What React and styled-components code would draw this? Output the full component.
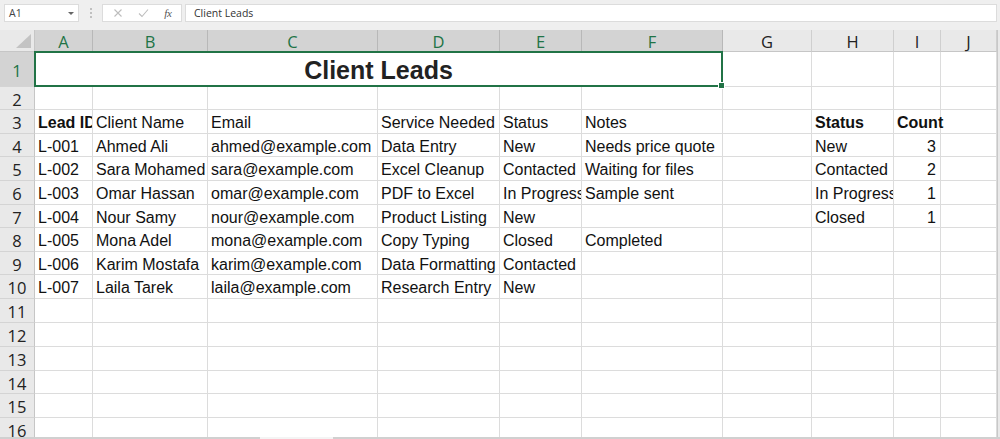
import React from "react";
import styled, { createGlobalStyle } from "styled-components";

const Global = createGlobalStyle`
  html, body { margin: 0; padding: 0; background: #ffffff; }
  body { width: 1000px; height: 439px; overflow: hidden; font-family: "Liberation Sans", Arial, sans-serif; }
  * { box-sizing: border-box; }
`;

const Page = styled.div`
  width: 1000px;
  height: 439px;
  display: flex;
  flex-direction: column;
  overflow: hidden;
  background: #fff;
`;

const TopBar = styled.div`
  height: 30px;
  flex: none;
  display: flex;
  align-items: flex-start;
  padding: 4px 3px 0 4px;
  background: #efefef;
  font-family: "Open Sans", "Noto Sans", sans-serif;
  font-size: 10.5px;
  color: #333;
`;

const NameBox = styled.div`
  width: 75px;
  height: 18px;
  background: #fff;
  border: 1px solid #dcdcdc;
  display: flex;
  align-items: center;
  justify-content: space-between;
  padding: 0 4px 0 4px;
  color: #444;
`;

const Caret = styled.span`
  width: 0;
  height: 0;
  border-left: 3px solid transparent;
  border-right: 3px solid transparent;
  border-top: 3px solid #666;
`;

const Grip = styled.div`
  width: 23px;
  height: 18px;
  display: flex;
  flex-direction: column;
  align-items: center;
  justify-content: center;
  gap: 2px;
  span { width: 2px; height: 2px; background: #b0b0b0; border-radius: 1px; }
`;

const FxBox = styled.div`
  width: 80px;
  height: 18px;
  background: #fff;
  border: 1px solid #dcdcdc;
  display: flex;
  align-items: center;
  justify-content: space-around;
  padding: 0 2px;
`;

const FxGlyph = styled.span`
  font-family: "Liberation Serif", serif;
  font-style: italic;
  font-size: 11px;
  color: #555;
  letter-spacing: -0.5px;
`;

const FormulaInput = styled.div`
  flex: 1;
  height: 18px;
  margin-left: 3px;
  background: #fff;
  border: 1px solid #dcdcdc;
  display: flex;
  align-items: center;
  padding-left: 8px;
  color: #333;
`;

const SheetArea = styled.div`
  flex: 1;
  display: flex;
  overflow: hidden;
`;

const Grid = styled.div`
  width: 997px;
  height: 100%;
  overflow: hidden;
  display: grid;
  grid-template-columns: 35px 58px 115px 170px 122px 82px 141px 89px 82px 47px 56px;
  grid-template-rows: 22px 35px 23px 24px 23px 24px 24px 23px 24px 23px 24px 24px 24px 24px 23px 24px 24px;
  align-content: start;
`;

const VScroll = styled.div`
  width: 3px;
  height: 100%;
  background: #e9e9e9;
  border-left: 1px solid #c8c8c8;
`;

const Corner = styled.div`
  position: relative;
  background: #e9e9e9;
  border-right: 1px solid #c6c6c6;
  border-bottom: 1px solid #c6c6c6;
  &::after {
    content: "";
    position: absolute;
    right: 3px;
    bottom: 3px;
    width: 0;
    height: 0;
    border-left: 15px solid transparent;
    border-bottom: 14px solid #c3c3c3;
  }
`;

const ColHead = styled.div`
  display: flex;
  align-items: center;
  justify-content: center;
  font-family: "Open Sans", "Noto Sans", sans-serif;
  font-size: 16.5px;
  padding-top: 1px;
  background: ${(p) => (p.$sel ? "#d3d3d3" : "#e9e9e9")};
  color: ${(p) => (p.$sel ? "#217346" : "#222")};
  border-right: 1px solid ${(p) => (p.$sel ? "#b8b8b8" : "#cfcfcf")};
  border-bottom: 1px solid ${(p) => (p.$sel ? "#217346" : "#c6c6c6")};
`;

const RowHead = styled.div`
  display: flex;
  align-items: center;
  justify-content: center;
  font-family: "Open Sans", "Noto Sans", sans-serif;
  font-size: 16.5px;
  padding-top: 2px;
  background: ${(p) => (p.$sel ? "#d3d3d3" : "#e9e9e9")};
  color: ${(p) => (p.$sel ? "#217346" : "#222")};
  border-right: 1px solid ${(p) => (p.$sel ? "#217346" : "#c6c6c6")};
  border-bottom: 1px solid #d4d4d4;
`;

const Cell = styled.div`
  display: flex;
  align-items: center;
  justify-content: ${(p) => (p.$right ? "flex-end" : "flex-start")};
  padding: 3px ${(p) => (p.$right ? "4px" : "0")} 0 3px;
  font-family: "Liberation Sans", Arial, sans-serif;
  font-size: 16px;
  font-weight: ${(p) => (p.$bold ? 700 : 400)};
  color: #111;
  white-space: nowrap;
  overflow: ${(p) => (p.$clip ? "hidden" : "visible")};
  border-right: 1px solid #dcdcdc;
  border-bottom: 1px solid #dcdcdc;
  position: relative;
  z-index: ${(p) => (p.$clip ? 0 : 1)};
`;

const TitleCell = styled.div`
  grid-column: span 6;
  position: relative;
  display: flex;
  align-items: center;
  justify-content: center;
  padding-top: 3px;
  font-family: "Liberation Sans", Arial, sans-serif;
  font-size: 25px;
  font-weight: 700;
  color: #222;
  border-right: 1px solid #dcdcdc;
  border-bottom: 1px solid #dcdcdc;
  &::before {
    content: "";
    position: absolute;
    left: -1px;
    top: -1px;
    right: -1px;
    bottom: -1px;
    border: 2px solid #217346;
    pointer-events: none;
    z-index: 2;
  }
  &::after {
    content: "";
    position: absolute;
    right: -3px;
    bottom: -3px;
    width: 5px;
    height: 5px;
    background: #217346;
    border: 1px solid #fff;
    z-index: 3;
  }
`;

const Footer = styled.div`
  height: 2px;
  flex: none;
  display: flex;
  background: #fff;
`;

const FooterSeg = styled.div`
  height: 2px;
  width: ${(p) => p.$w};
  flex: ${(p) => (p.$grow ? 1 : "none")};
  background: ${(p) => p.$bg};
`;

const columns = ["A", "B", "C", "D", "E", "F", "G", "H", "I", "J"];

const data = {
  3: [{ t: "Lead ID", b: true }, { t: "Client Name" }, { t: "Email" }, { t: "Service Needed" }, { t: "Status" }, { t: "Notes" }, null, { t: "Status", b: true }, { t: "Count", b: true }, null],
  4: ["L-001", "Ahmed Ali", "ahmed@example.com", "Data Entry", "New", "Needs price quote", null, "New", { t: "3", r: true }, null],
  5: ["L-002", "Sara Mohamed", "sara@example.com", "Excel Cleanup", "Contacted", "Waiting for files", null, "Contacted", { t: "2", r: true }, null],
  6: ["L-003", "Omar Hassan", "omar@example.com", "PDF to Excel", "In Progress", "Sample sent", null, "In Progress", { t: "1", r: true }, null],
  7: ["L-004", "Nour Samy", "nour@example.com", "Product Listing", "New", null, null, "Closed", { t: "1", r: true }, null],
  8: ["L-005", "Mona Adel", "mona@example.com", "Copy Typing", "Closed", "Completed", null, null, null, null],
  9: ["L-006", "Karim Mostafa", "karim@example.com", "Data Formatting", "Contacted", null, null, null, null, null],
  10: ["L-007", "Laila Tarek", "laila@example.com", "Research Entry", "New", null, null, null, null, null],
};

const norm = (v) => (v == null ? null : typeof v === "string" ? { t: v } : v);

function renderRow(r) {
  const cells = [];
  cells.push(
    <RowHead key={`h${r}`} $sel={r === 1}>
      {r}
    </RowHead>
  );
  if (r === 1) {
    cells.push(<TitleCell key="title">Client Leads</TitleCell>);
    for (let c = 6; c < 10; c++) cells.push(<Cell key={`1-${c}`} $clip />);
    return cells;
  }
  const row = (data[r] || []).map(norm);
  for (let c = 0; c < 10; c++) {
    const v = row[c];
    const next = row[c + 1];
    cells.push(
      <Cell key={`${r}-${c}`} $bold={v && v.b} $right={v && v.r} $clip={!!next || (v && v.r)}>
        {v ? v.t : null}
      </Cell>
    );
  }
  return cells;
}

export default function App() {
  const rows = [];
  for (let r = 1; r <= 16; r++) rows.push(...renderRow(r));
  return (
    <Page>
      <Global />
      <TopBar>
        <NameBox>
          <span>A1</span>
          <Caret />
        </NameBox>
        <Grip>
          <span />
          <span />
          <span />
        </Grip>
        <FxBox>
          <svg width="10" height="10" viewBox="0 0 10 10">
            <path d="M1.5 1.5 L8.5 8.5 M8.5 1.5 L1.5 8.5" stroke="#bdbdbd" strokeWidth="1.1" fill="none" />
          </svg>
          <svg width="11" height="10" viewBox="0 0 11 10">
            <path d="M1 5.5 L4 8.5 L10 1.5" stroke="#bdbdbd" strokeWidth="1.1" fill="none" />
          </svg>
          <FxGlyph>fx</FxGlyph>
        </FxBox>
        <FormulaInput>Client Leads</FormulaInput>
      </TopBar>
      <SheetArea>
        <Grid>
          <Corner />
          {columns.map((c, i) => (
            <ColHead key={c} $sel={i < 6}>
              {c}
            </ColHead>
          ))}
          {rows}
        </Grid>
        <VScroll />
      </SheetArea>
      <Footer>
        <FooterSeg $w="260px" $bg="#d0d0d0" />
        <FooterSeg $w="73px" $bg="#f4f4f4" />
        <FooterSeg $grow $bg="#d0d0d0" />
      </Footer>
    </Page>
  );
}
